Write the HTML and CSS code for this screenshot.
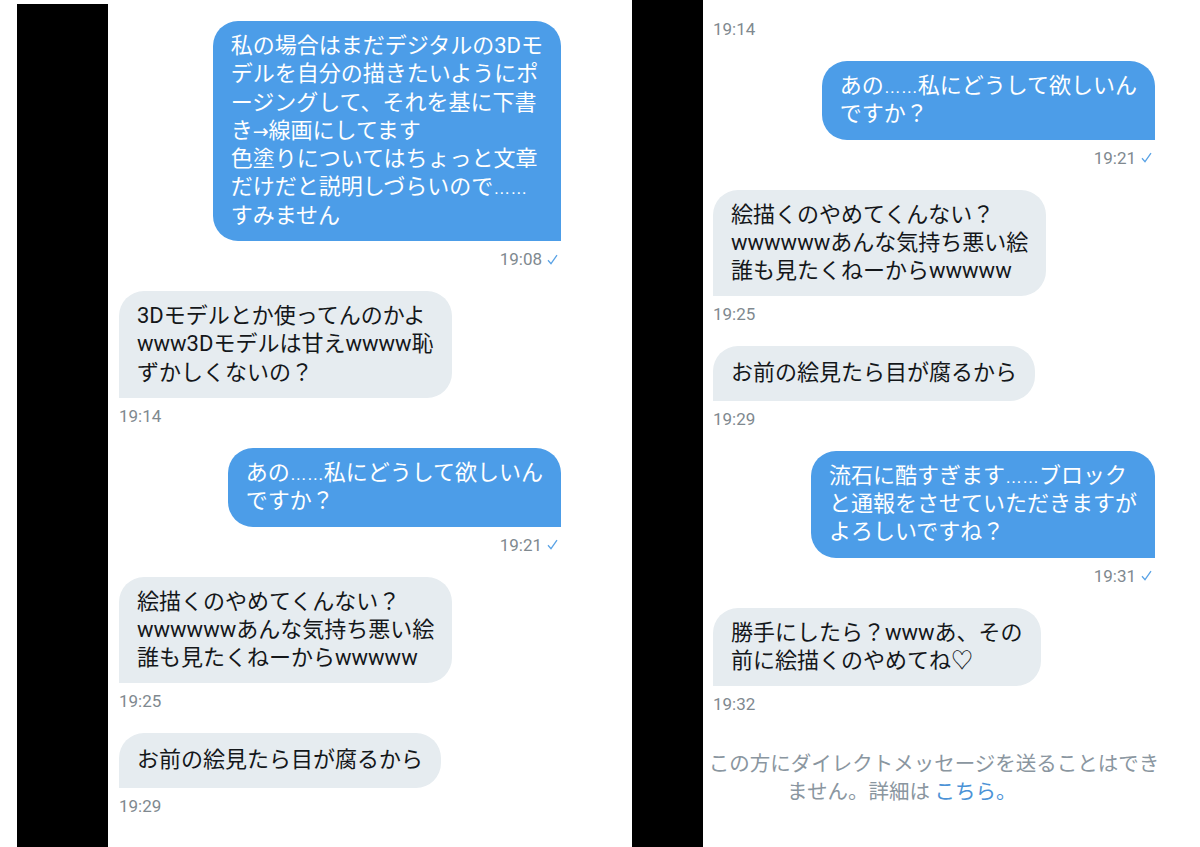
FILE: index.html
```html
<!DOCTYPE html>
<html lang="ja">
<head>
    <meta charset="UTF-8">
    <meta name="viewport" content="width=device-width, initial-scale=1.0">
    <title>DM</title>
    <link rel="stylesheet" href="styles.css">
</head>
<body>

    <div class="page">
        <div class="bar bar-left"></div>

        <!-- first screenshot -->
        <div class="panel panel-left">
            <div class="msg out">
                <div class="bubble">私の場合はまだデジタルの3Dモ<br>デルを自分の描きたいようにポ<br>ージングして、それを基に下書<br>き<span class="arrow">→</span>線画にしてます<br>色塗りについてはちょっと文章<br>だけだと説明しづらいので<span class="dots">……</span><br>すみません</div>
                <div class="time">19:08 <svg class="check" width="11" height="11" viewBox="0 0 11 11"><path d="M1 6.2 L4 9.6 L10 1.2"/></svg></div>
            </div>

            <div class="msg in">
                <div class="bubble">3Dモデルとか使ってんのかよ<br>www3Dモデルは甘えwwww恥<br>ずかしくないの？</div>
                <div class="time">19:14</div>
            </div>

            <div class="msg out">
                <div class="bubble">あの<span class="dots">……</span>私にどうして欲しいん<br>ですか？</div>
                <div class="time">19:21 <svg class="check" width="11" height="11" viewBox="0 0 11 11"><path d="M1 6.2 L4 9.6 L10 1.2"/></svg></div>
            </div>

            <div class="msg in">
                <div class="bubble">絵描くのやめてくんない？<br>wwwwwwあんな気持ち悪い絵<br>誰も見たくねーからwwwww</div>
                <div class="time">19:25</div>
            </div>

            <div class="msg in">
                <div class="bubble short">お前の絵見たら目が腐るから</div>
                <div class="time">19:29</div>
            </div>
        </div>

        <div class="bar bar-mid"></div>

        <!-- second screenshot -->
        <div class="panel panel-right">
            <div class="msg in">
                <div class="time">19:14</div>
            </div>

            <div class="msg out">
                <div class="bubble">あの<span class="dots">……</span>私にどうして欲しいん<br>ですか？</div>
                <div class="time">19:21 <svg class="check" width="11" height="11" viewBox="0 0 11 11"><path d="M1 6.2 L4 9.6 L10 1.2"/></svg></div>
            </div>

            <div class="msg in">
                <div class="bubble">絵描くのやめてくんない？<br>wwwwwwあんな気持ち悪い絵<br>誰も見たくねーからwwwww</div>
                <div class="time">19:25</div>
            </div>

            <div class="msg in">
                <div class="bubble short">お前の絵見たら目が腐るから</div>
                <div class="time">19:29</div>
            </div>

            <div class="msg out">
                <div class="bubble">流石に酷すぎます<span class="dots">……</span>ブロック<br>と通報をさせていただきますが<br>よろしいですね？</div>
                <div class="time">19:31 <svg class="check" width="11" height="11" viewBox="0 0 11 11"><path d="M1 6.2 L4 9.6 L10 1.2"/></svg></div>
            </div>

            <div class="msg in">
                <div class="bubble">勝手にしたら？wwwあ、その<br>前に絵描くのやめてね<span class="heart">♡</span></div>
                <div class="time">19:32</div>
            </div>

            <div class="notice">
                <div class="notice-line">この方にダイレクトメッセージを送ることはでき</div>
                <div class="notice-line second">ません。詳細は <a class="link">こちら。</a></div>
            </div>
        </div>
    </div>

</body>
</html>
```

FILE: styles.css
```css
body {
    margin: 0;
    background: #fff;
    font-family: Roboto, "Noto Sans CJK JP", sans-serif;
    overflow: hidden;
}

.page {
    display: flex;
    height: 847px;
    padding-left: 17px;
}

.bar {
    background: #000;
    flex-shrink: 0;
}

.bar-left {
    width: 91px;
    margin-top: 4px;
}

.bar-mid {
    width: 71px;
    margin-left: 60px;
}

.panel {
    flex-shrink: 0;
    box-sizing: border-box;
}

.panel-left {
    width: 464px;
    padding: 21px 11px 0;
}

.panel-right {
    width: 462px;
    padding: 11px 10px 0;
}

/* Message rows */
.msg {
    display: flex;
    flex-direction: column;
}

.msg.out {
    align-items: flex-end;
}

.msg.in {
    align-items: flex-start;
}

.bubble {
    font-size: 22px;
    line-height: 28.3px;
    padding: 11px 18px;
    border-radius: 25px;
    white-space: nowrap;
}

.bubble.short {
    padding: 13px 18px;
}

/* glyphs pulled from other fonts, kept out of the line height */
.dots {
    font-family: "Liberation Sans", sans-serif;
    font-size: 17px;
    line-height: 0;
}

.arrow {
    font-family: "DejaVu Sans", sans-serif;
    font-size: 19px;
    line-height: 0;
}

.heart {
    line-height: 0;
}

.out .bubble {
    background: #4c9de8;
    color: #fff;
    border-bottom-right-radius: 0;
}

.in .bubble {
    background: #e6ecf0;
    color: #14171a;
    border-bottom-left-radius: 0;
}

.time {
    font-size: 17px;
    line-height: 20px;
    height: 20px;
    margin: 8px 0 22px;
    color: #80898f;
    display: flex;
    align-items: center;
    gap: 5px;
}

.out .time {
    padding-right: 3px;
}

.check {
    fill: none;
    stroke: #5aa3e6;
    stroke-width: 1.3;
}

/* Footer notice */
.notice {
    margin: 12px -10px 0;
    font-family: "Noto Sans CJK JP", sans-serif;
    font-size: 20.5px;
    line-height: 28px;
    color: #8a96a0;
}

.notice-line {
    text-align: center;
    white-space: nowrap;
}

.notice-line.second {
    text-align: left;
    padding-left: 84px;
}

.link {
    color: #4a92d6;
}
```
